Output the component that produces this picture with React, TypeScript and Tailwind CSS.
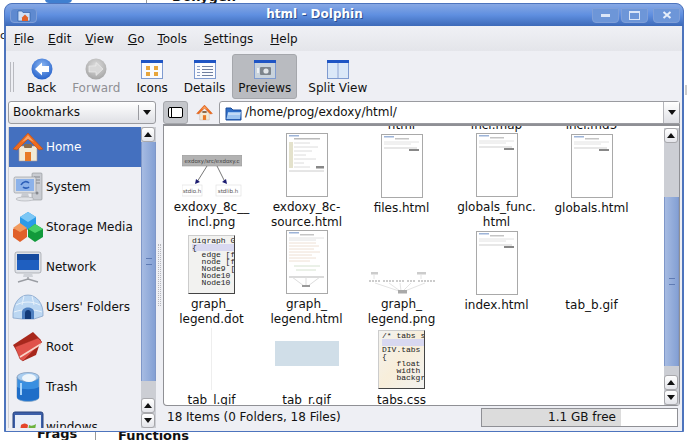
import type { ReactNode } from "react";

function ArrowUp() {
  return (
    <svg width="8" height="5" viewBox="0 0 8 5">
      <path d="M0 5 L4 0 L8 5 Z" fill="#111" />
    </svg>
  );
}

function ArrowDown() {
  return (
    <svg width="8" height="5" viewBox="0 0 8 5">
      <path d="M0 0 L8 0 L4 5 Z" fill="#111" />
    </svg>
  );
}

function HomeIcon({ size }: { size: number }) {
  return (
    <svg width={size} height={size} viewBox="0 0 32 32">
      <path d="M7 15 H25 V30 H7 Z" fill="#f1ead6" stroke="#a99" strokeWidth="0.6" />
      <path d="M1 18 L16 2 L31 18 L27 19 L16 8 L5 19 Z" fill="#ee6b1d" stroke="#c24e10" strokeWidth="0.6" />
      <path d="M10 11 L16 4 L22 11 L16 8 Z" fill="#f7a468" />
      <rect x="13" y="21" width="6" height="9" fill="#e87a26" />
      <rect x="12" y="13" width="8" height="4" rx="1" fill="#8a6d4d" />
    </svg>
  );
}

function FolderIcon() {
  return (
    <svg width="17" height="16" viewBox="0 0 17 16">
      <path d="M1 3 H6 L8 5 H16 V15 H1 Z" fill="#2f6fc8" stroke="#1c4d9a" />
      <path d="M3 7 H16 L15 14 H1.5 Z" fill="#9cc4f0" />
      <path d="M3 9 H15" stroke="#e6f0fb" />
    </svg>
  );
}

function CircleArrow({ disabled, dir }: { disabled?: boolean; dir: "left" | "right" }) {
  const id = disabled ? "gray-ball" : "blue-ball";
  return (
    <svg width="22" height="22" viewBox="0 0 22 22">
      <defs>
        <radialGradient id={id} cx="0.5" cy="0.35" r="0.7">
          <stop offset="0" stopColor={disabled ? "#dedede" : "#8db8f2"} />
          <stop offset="1" stopColor={disabled ? "#a2a2a2" : "#1f5cc8"} />
        </radialGradient>
      </defs>
      <circle cx="11" cy="11" r="10.5" fill={`url(#${id})`} />
      <path
        d={dir === "left" ? "M4 11 L11 4.5 V8 H18 V14 H11 V17.5 Z" : "M18 11 L11 4.5 V8 H4 V14 H11 V17.5 Z"}
        fill={disabled ? "#d8d8d8" : "#fff"}
        stroke={disabled ? "#f2f2f2" : "none"}
        strokeWidth="0.6"
      />
    </svg>
  );
}

function ViewFrame({ children, w = 22 }: { children: ReactNode; w?: number }) {
  return (
    <svg width={w} height="19" viewBox={`0 0 ${w} 19`}>
      <rect x="0.5" y="0.5" width={w - 1} height="18" fill="#fafbfe" stroke="#7f9bd0" />
      <rect x="0" y="0" width={w} height="3" fill="#1f55c4" />
      {children}
    </svg>
  );
}

function IconsViewIcon() {
  return (
    <ViewFrame>
      <rect x="5" y="6" width="4" height="4" fill="#e8a63d" />
      <rect x="13" y="6" width="4" height="4" fill="#e8a63d" />
      <rect x="5" y="12" width="4" height="4" fill="#e8a63d" />
      <rect x="13" y="12" width="4" height="4" fill="#e8a63d" />
    </ViewFrame>
  );
}

function DetailsViewIcon() {
  return (
    <ViewFrame>
      <path d="M3 6.5 H6 M3 9.5 H6 M3 12.5 H6 M3 15.5 H6" stroke="#8b9fc5" />
      <path d="M8 6.5 H19 M8 9.5 H19 M8 12.5 H19 M8 15.5 H19" stroke="#6f7f9f" />
    </ViewFrame>
  );
}

function PreviewsViewIcon() {
  return (
    <ViewFrame>
      <rect x="1" y="3" width="20" height="15" fill="#c9d3dc" />
      <rect x="6" y="7" width="11" height="8" rx="1" fill="#7d858c" />
      <circle cx="12" cy="11" r="2.6" fill="#e3e7ea" />
      <rect x="3" y="8" width="2" height="5" fill="#eef1f4" />
    </ViewFrame>
  );
}

function SplitViewIcon() {
  return (
    <ViewFrame>
      <rect x="1" y="3" width="9.5" height="15" fill="#dbe8f8" />
      <rect x="11.5" y="3" width="9.5" height="15" fill="#dbe8f8" />
      <path d="M11 3 V18" stroke="#7f9bd0" />
    </ViewFrame>
  );
}

function SystemIcon() {
  return (
    <svg width="32" height="32" viewBox="0 0 32 32">
      <rect x="20" y="2" width="10" height="27" rx="1" fill="#c9ccd2" stroke="#8d9096" strokeWidth="0.6" />
      <path d="M22 6 H28 M22 9 H28 M22 12 H28" stroke="#85888e" />
      <circle cx="25" cy="22" r="1.5" fill="#85888e" />
      <rect x="2" y="6" width="22" height="16" rx="1.5" fill="#d9dce2" stroke="#8d9096" strokeWidth="0.6" />
      <rect x="4" y="8" width="18" height="12" fill="#8cb2ea" />
      <path d="M9 14 C11 10 15 10 17 12 M17 16 C15 18 12 17 11 16" stroke="#2c5fb8" strokeWidth="1.6" fill="none" />
      <path d="M10 22 H16 L17 26 H9 Z" fill="#c8cbd1" />
      <ellipse cx="13" cy="28" rx="9" ry="2" fill="#e1e3e7" stroke="#9a9da3" strokeWidth="0.5" />
    </svg>
  );
}

function StorageIcon() {
  return (
    <svg width="32" height="32" viewBox="0 0 32 32">
      <path d="M16 1 L24 6 V14 L16 19 L8 14 V6 Z" fill="#2b9be8" />
      <path d="M16 1 L24 6 L16 11 L8 6 Z" fill="#7cc7f5" />
      <path d="M8 14 L15 18 V26 L8 31 L1 26 V18 Z" fill="#e0602a" />
      <path d="M8 12 L15 17 L8 21 L1 17 Z" fill="#f19a5e" />
      <path d="M23 13 L31 18 V26 L23 31 L16 26 V18 Z" fill="#119a3b" />
      <path d="M23 13 L31 18 L23 22 L16 18 Z" fill="#47cf68" />
    </svg>
  );
}

function NetworkIcon() {
  return (
    <svg width="32" height="32" viewBox="0 0 32 32">
      <rect x="3" y="1" width="26" height="21" rx="2" fill="#dfe2e8" stroke="#8d9096" strokeWidth="0.6" />
      <rect x="5" y="3" width="22" height="16" fill="#1f5fc0" />
      <rect x="5" y="3" width="22" height="6" fill="#154a9e" />
      <path d="M12 22 H20 L21 26 H11 Z" fill="#cfd2d8" />
      <path d="M16 26 V29 M6 31 L16 28 L26 31" stroke="#9a9da3" strokeWidth="1.4" fill="none" />
    </svg>
  );
}

function IglooIcon() {
  return (
    <svg width="32" height="32" viewBox="0 0 32 32">
      <path d="M1 27 C0 12 8 4 16 4 C24 4 32 12 31 25 L22 28 H10 Z" fill="#bcd7f2" stroke="#7d9cc4" strokeWidth="0.7" />
      <path d="M4 14 C12 10 20 10 28 14 M2 21 C10 18 22 18 30 21 M12 5 L10 14 M20 5 L22 14" stroke="#e8f2fb" strokeWidth="1" fill="none" />
      <path d="M10 28 V21 C10 15 22 15 22 21 V28 Z" fill="#4d7fc0" />
      <path d="M13 28 V22 C13 18 19 18 19 22 V28 Z" fill="#123a78" />
    </svg>
  );
}

function RedFolderIcon() {
  return (
    <svg width="32" height="32" viewBox="0 0 32 32">
      <path d="M1 14 L21 1 L29 9 L24 24 L11 30 Z" fill="#a8281c" />
      <path d="M3 16 L26 7 L30 11 L11 30 L8 28 Z" fill="#e0524a" stroke="#9c2a20" strokeWidth="0.5" />
      <path d="M8 26 L29 13" stroke="#f8d4c8" strokeWidth="1.6" />
    </svg>
  );
}

function TrashIcon() {
  return (
    <svg width="32" height="32" viewBox="0 0 32 32">
      <path d="M5 6 V26 C5 32 27 32 27 26 V6 Z" fill="#3a8fe0" stroke="#8ba3bf" strokeWidth="0.7" />
      <path d="M5 16 C10 19 22 19 27 16 V26 C27 31 5 31 5 26 Z" fill="#1f6ec8" />
      <ellipse cx="16" cy="6" rx="11" ry="4.5" fill="#a8cdf0" stroke="#7a93b4" strokeWidth="0.7" />
      <ellipse cx="17" cy="7" rx="7" ry="4" fill="#eef5fb" />
      <path d="M9 12 V24" stroke="#a8d4fa" strokeWidth="2" />
    </svg>
  );
}

function WindowsIcon() {
  return (
    <svg width="32" height="32" viewBox="0 0 32 32">
      <rect x="1" y="1" width="30" height="30" rx="2" fill="#3c5fa8" stroke="#29457f" />
      <rect x="3" y="4" width="26" height="24" fill="#e8eef8" />
      <path d="M9 14 C12 12 14 12 16 14 L15 20 C13 18 11 18 8 20 Z" fill="#e5462a" />
      <path d="M17 14 C19 15 21 15 24 13 L23 19 C21 21 19 21 16 20 Z" fill="#6cb33f" />
      <path d="M8 21 C11 19 13 19 15 21 L14 27 C12 25 10 25 7 27 Z" fill="#3a78d8" />
      <path d="M16 21 C18 22 20 22 23 20 L22 26 C20 28 18 28 15 27 Z" fill="#f2c230" />
    </svg>
  );
}

function PageThumb({ dense }: { dense?: boolean }) {
  return (
    <svg width="42" height="64" viewBox="0 0 42 64">
      <rect x="0.5" y="0.5" width="41" height="63" fill="#fff" stroke="#a9a9a9" />
      <rect x="3" y="2" width="10" height="1.5" fill="#9db4d8" />
      <rect x="14" y="4" width="14" height="1.5" fill="#c5c5c5" />
      <path d="M3 8 H38 M3 10 H30" stroke="#e2e2e2" />
      {dense ? (
        <>
          <path d="M3 13 H30 M3 16 H33 M3 19 H28 M3 22 H34 M3 25 H26 M3 28 H30 M3 31 H24" stroke="#eee0d4" />
          <path d="M8 36 H34 M10 40 H30" stroke="#d5e2d0" />
          <path d="M3 47 H38" stroke="#b5b5b5" />
          <path d="M20 47 L20 56 M6 47 L18 56 M34 47 L22 56" stroke="#ddd" />
          <rect x="16" y="55" width="8" height="2" fill="#999" />
        </>
      ) : (
        <>
          <path d="M3 14 H36" stroke="#cfcfcf" />
          <rect x="28" y="15" width="10" height="2" fill="#888" />
        </>
      )}
    </svg>
  );
}

function SourceThumb() {
  return (
    <svg width="42" height="64" viewBox="0 0 42 64">
      <rect x="0.5" y="0.5" width="41" height="63" fill="#fff" stroke="#a9a9a9" />
      <rect x="3" y="2" width="10" height="1.5" fill="#9db4d8" />
      <rect x="8" y="5" width="26" height="1.5" fill="#bbb" />
      <rect x="3" y="9" width="4" height="26" fill="#e4e2cc" />
      <path d="M8 10 H24 M8 14 H32 M8 18 H26 M8 22 H20 M8 26 H30 M8 30 H18 M8 34 H24" stroke="#dcdcdc" />
      <path d="M3 38 H38" stroke="#ccc" />
      <rect x="30" y="33" width="8" height="2.5" fill="#888" />
    </svg>
  );
}

function GraphThumb() {
  return (
    <svg width="60" height="42" viewBox="0 0 60 42">
      <rect x="0" y="0" width="60" height="11" fill="#b2b2b2" stroke="#999" strokeWidth="0.6" />
      <text x="30" y="7.5" textAnchor="middle" fontSize="5.5" fill="#444">exdoxy/src/exdoxy.c</text>
      <path d="M25 11 L15 27 M35 11 L43 27" stroke="#777" />
      <path d="M13 29 L14 24 L18 27 Z M45 29 L40 27 L44 24 Z" fill="#1b1b70" />
      <rect x="0" y="30" width="20" height="11" fill="#fff" stroke="#ddd" strokeWidth="0.6" />
      <text x="10" y="37.5" textAnchor="middle" fontSize="5.5" fill="#555">stdio.h</text>
      <rect x="34" y="30" width="25" height="11" fill="#fff" stroke="#ddd" strokeWidth="0.6" />
      <text x="46" y="37.5" textAnchor="middle" fontSize="5.5" fill="#555">stdlib.h</text>
    </svg>
  );
}

function LegendThumb() {
  return (
    <svg width="66" height="22" viewBox="0 0 66 22">
      <rect x="2" y="0" width="7" height="2.5" fill="#ccc" />
      <rect x="48" y="0" width="9" height="2.5" fill="#ccc" />
      <path d="M0 9 H12 M14 9 H25 M27 9 H35 M38 9 H46 M49 9 H66" stroke="#ccc" strokeWidth="2" strokeDasharray="2 1" />
      <path d="M6 11 L30 19 M20 11 L31 19 M31 11 L32 19 M42 11 L34 19 M56 11 L36 19 M5 2 V7 M52 2 V7" stroke="#e4e4e4" />
      <rect x="29" y="18" width="9" height="3.5" fill="#aaa" />
    </svg>
  );
}

function CodeThumb({ lines, warm }: { lines: string[]; warm?: boolean }) {
  return (
    <div
      className={`flex h-[59px] w-[47px] flex-col overflow-hidden border border-[#ccc] border-r-[#444] border-b-[#444] pl-[3px] pt-[1px] font-['Liberation_Mono',monospace] text-[8px] leading-[7px] text-[#222] ${
        warm ? "bg-gradient-to-br from-[#f2f2f0] via-[#f8eeda] to-[#f2f2f0]" : "bg-[#f2f2f0]"
      }`}
    >
      {lines.map((line, i) => (
        <div key={i} className={`h-[7px] shrink-0 whitespace-pre ${i === 1 ? "bg-[#d8d8f0]" : ""}`}>
          {line}
        </div>
      ))}
    </div>
  );
}

const files: { label: string[]; thumb?: ReactNode }[] = [
  { label: ["", ""] },
  { label: ["", ""] },
  { label: ["exdoxy_8c_", "html"] },
  { label: ["globals_", "incl.map"] },
  { label: ["globals_", "incl.md5"] },
  { label: ["exdoxy_8c__", "incl.png"], thumb: <GraphThumb /> },
  { label: ["exdoxy_8c-", "source.html"], thumb: <SourceThumb /> },
  { label: ["files.html"], thumb: <PageThumb /> },
  { label: ["globals_func.", "html"], thumb: <PageThumb /> },
  { label: ["globals.html"], thumb: <PageThumb /> },
  {
    label: ["graph_", "legend.dot"],
    thumb: (
      <CodeThumb lines={["digraph G", "{", "  edge [fo", "  node [fo", "  Node9 [s", "  Node10 -", "  Node10 ["]} />
    ),
  },
  { label: ["graph_", "legend.html"], thumb: <PageThumb dense /> },
  { label: ["graph_", "legend.png"], thumb: <LegendThumb /> },
  { label: ["index.html"], thumb: <PageThumb /> },
  { label: ["tab_b.gif"] },
  { label: ["tab_l.gif"], thumb: <div className="h-[62px] w-px bg-[#eeeeee]" /> },
  { label: ["tab_r.gif"], thumb: <div className="mb-[24px] h-[25px] w-[64px] bg-[#d0dee8]" /> },
  {
    label: ["tabs.css"],
    thumb: (
      <div className="mb-px">
        <CodeThumb warm lines={["/* tabs st", "", "DIV.tabs", "{", "   float", "   width", "   backgro"]} />
      </div>
    ),
  },
];

const places = [
  { name: "Home", icon: <HomeIcon size={32} />, active: true },
  { name: "System", icon: <SystemIcon /> },
  { name: "Storage Media", icon: <StorageIcon /> },
  { name: "Network", icon: <NetworkIcon /> },
  { name: "Users' Folders", icon: <IglooIcon /> },
  { name: "Root", icon: <RedFolderIcon /> },
  { name: "Trash", icon: <TrashIcon /> },
  { name: "windows", icon: <WindowsIcon /> },
];

const tools = [
  { name: "Back", icon: <CircleArrow dir="left" />, cls: "px-[6px]" },
  { name: "Forward", icon: <CircleArrow dir="right" disabled />, disabled: true, cls: "px-[6px]" },
  { name: "Icons", icon: <IconsViewIcon />, cls: "px-[6px]" },
  { name: "Details", icon: <DetailsViewIcon />, cls: "px-[6px]" },
  { name: "Previews", icon: <PreviewsViewIcon />, active: true, cls: "-ml-[2px] px-[5px]" },
  { name: "Split View", icon: <SplitViewIcon />, cls: "ml-[2px] px-[6px]" },
];

const menus = [
  { name: "File", cls: "" },
  { name: "Edit", cls: "" },
  { name: "View", cls: "" },
  { name: "Go", cls: "" },
  { name: "Tools", cls: "-ml-px" },
  { name: "Settings", cls: "ml-[3px]" },
  { name: "Help", cls: "ml-[3px]" },
];

function ScrollButton({ children }: { children: ReactNode }) {
  return (
    <div className="flex h-[15px] w-[14px] items-center justify-center rounded-[3px] border border-[#a8a8ac] bg-gradient-to-b from-white to-[#e4e5ea]">
      {children}
    </div>
  );
}

function Scrollbar({ before, thumb, after }: { before: string; thumb: string; after: string }) {
  return (
    <div className="flex h-full w-[15px] shrink-0 flex-col bg-[#ccced4]">
      <ScrollButton>
        <ArrowUp />
      </ScrollButton>
      <div className={before} />
      <div className={`${thumb} flex items-center justify-center border-x border-[#7f97c8] bg-gradient-to-r from-[#a6bbe2] to-[#84a0d4]`}>
        <div className="h-[7px] w-[6px] border-y border-[#5f7bb4]" />
      </div>
      <div className={after} />
      <ScrollButton>
        <ArrowUp />
      </ScrollButton>
      <ScrollButton>
        <ArrowDown />
      </ScrollButton>
    </div>
  );
}

export default function App() {
  return (
    <div className="relative h-[440px] w-[687px] overflow-hidden bg-white font-['DejaVu_Sans',sans-serif] text-[12px] leading-[15px] text-[#111]">
      {/* window underneath */}
      <div className="absolute left-[172px] top-[-11px] text-[13px] font-bold">Doxygen</div>
      <div className="absolute left-[45px] top-[-6px] h-[9px] w-[27px] rounded-sm bg-[#3f7fd0]" />
      <div className="absolute left-[146px] top-0 h-[4px] w-px bg-[#999]" />
      <div className="absolute left-[37px] top-[426px] text-[13px] font-bold">Frags</div>
      <div className="absolute left-[118px] top-[428px] text-[13px] font-bold">Functions</div>
      <div className="absolute left-[95px] top-[432px] h-[8px] w-px bg-[#999]" />
      <div className="absolute left-0 top-[28px] text-[11px]">c</div>
      <div className="absolute left-[685px] top-[85px] h-[10px] w-[2px] bg-[#ccc]" />

      <div className="absolute left-[4px] top-[3px] flex h-[429px] w-[680px] flex-col overflow-hidden rounded-t-[8px] border border-[#4d74bd] bg-[#4d74bd]">
        {/* title bar */}
        <div className="flex h-[22px] shrink-0 items-center bg-gradient-to-b from-[#87a8e4] via-[#5f8fe0] to-[#3d6ab8] pl-[5px] pr-[3px]">
          <div className="flex h-[15px] w-[27px] items-center justify-center rounded-[4px] border border-[#7f9fd8] bg-[#5f8ad0]">
            <svg width="14" height="13" viewBox="0 0 14 13">
              <path d="M1 2 H5 L6 3.5 H13 V12 H1 Z" fill="#cfe0f8" stroke="#2f5fa8" strokeWidth="0.7" />
              <path d="M5 8.5 L8 5.5 L11 8.5 V12 H5 Z" fill="#e2622a" />
            </svg>
          </div>
          <div className="flex-1 pb-[2px] text-center text-[12px] font-bold text-white [text-shadow:1px_1px_0_#2c4f8f]">
            html - Dolphin
          </div>
          <div className="flex items-center gap-[2px]">
            <div className="flex h-[15px] w-[27px] items-center justify-center rounded-b-[4px] border border-[#7f9fd8] bg-[#6d96d8]">
              <div className="h-[3px] w-[9px] bg-[#dbe6f8]" />
            </div>
            <div className="flex h-[15px] w-[27px] items-center justify-center rounded-b-[4px] border border-[#7f9fd8] bg-[#6d96d8]">
              <div className="h-[9px] w-[11px] border border-t-2 border-[#dbe6f8]" />
            </div>
            <div className="ml-[3px] flex h-[15px] w-[27px] items-center justify-center rounded-b-[4px] border border-[#7f9fd8] bg-[#6d96d8]">
              <svg width="10" height="8" viewBox="0 0 10 8">
                <path d="M1.5 1 L8.5 7 M8.5 1 L1.5 7" stroke="#e6eefa" strokeWidth="2" />
              </svg>
            </div>
          </div>
        </div>

        {/* client area */}
        <div className="ml-px mr-px flex min-h-0 flex-1 flex-col bg-[#eeeff4]">
          {/* menu bar */}
          <div className="flex h-[25px] shrink-0 items-center gap-[14px] bg-gradient-to-b from-[#f0f1f5] to-[#e4e5ea] pl-[8px] pt-px">
            {menus.map((m) => (
              <div key={m.name} className={m.cls}>
                <span className="underline">{m.name[0]}</span>
                {m.name.slice(1)}
              </div>
            ))}
          </div>

          {/* toolbar */}
          <div className="flex h-[50px] shrink-0 items-start pl-[4px] pt-[3px]">
            <div className="mr-[6px] mt-[8px] h-[30px] w-[4px] border-x border-[#b9bac0]" />
            <div className="flex items-center gap-[2px]">
              {tools.map((t) => (
                <div
                  key={t.name}
                  className={`flex h-[45px] flex-col items-center rounded-[3px] pt-[2px] ${t.cls} ${
                    t.active ? "border border-[#a5a7ac] bg-[#b9bbc0]" : "border border-transparent"
                  } ${t.disabled ? "text-[#8f9094]" : ""}`}
                >
                  <div className="flex h-[24px] items-center">{t.icon}</div>
                  <div>{t.name}</div>
                </div>
              ))}
            </div>
          </div>

          {/* panels */}
          <div className="flex min-h-0 flex-1 pb-[3px] pl-[2px] pr-[2px]">
            <div className="flex w-[148px] shrink-0 flex-col">
              <div className="flex h-[23px] shrink-0 items-center rounded-[3px] border border-[#9a9ba0] bg-gradient-to-b from-white to-[#dfe0e5] pl-[4px]">
                <span className="flex-1">Bookmarks</span>
                <div className="flex h-[15px] w-[17px] items-center justify-center border-l border-[#9a9ba0]">
                  <ArrowDown />
                </div>
              </div>
              <div className="mt-[3px] flex min-h-0 flex-1 border-l border-[#d0d1d6]">
                <div className="min-w-0 flex-1 overflow-hidden">
                  {places.map((p) => (
                    <div
                      key={p.name}
                      className={`flex h-[40px] items-center gap-[2px] pl-[3px] ${p.active ? "bg-[#4470bf] text-white" : ""}`}
                    >
                      <div className="h-[32px] w-[32px] shrink-0">{p.icon}</div>
                      <span className="whitespace-nowrap">{p.name}</span>
                    </div>
                  ))}
                </div>
                <Scrollbar before="h-0" thumb="h-[239px]" after="flex-1" />
              </div>
            </div>

            {/* splitter */}
            <div className="flex w-[7px] shrink-0 items-center justify-center pt-[20px]">
              <div className="h-[62px] w-[3px] border-x border-dotted border-[#b5b6bb]" />
            </div>

            <div className="flex min-w-0 flex-1 flex-col">
              {/* location bar */}
              <div className="flex h-[23px] shrink-0 items-center">
                <div className="flex h-[23px] w-[25px] items-center justify-center rounded-[3px] border border-[#a5a7ac] bg-[#c4c6cb]">
                  <div className="h-[11px] w-[15px] rounded-[2px] border border-black bg-white pl-[2px]">
                    <div className="h-full w-px bg-black" />
                  </div>
                </div>
                <div className="ml-[7px] flex h-[18px] w-[18px] items-center justify-center">
                  <HomeIcon size={17} />
                </div>
                <div className="ml-[6px] flex h-[23px] min-w-0 flex-1 items-center rounded-t-[3px] border border-[#9a9ba0] bg-white pl-[5px]">
                  <FolderIcon />
                  <span className="ml-[3px] flex-1 text-[12px]">/home/prog/exdoxy/html/</span>
                  <div className="flex h-full w-[16px] items-center justify-center border-l border-[#b5b6bb] bg-gradient-to-b from-white to-[#dfe0e5]">
                    <ArrowDown />
                  </div>
                </div>
              </div>

              {/* file view */}
              <div className="flex h-[282px] shrink-0 rounded-b-[4px] border border-t-2 border-[#8f9095] bg-white">
                <div className="min-w-0 flex-1 overflow-hidden">
                  <div className="-mt-[90px] grid auto-rows-[97px] grid-cols-[repeat(5,95px)]">
                    {files.map((f, i) => (
                      <div key={i} className={`flex flex-col items-center ${i >= 15 ? "-mt-[2px]" : ""}`}>
                        <div className="flex h-[68px] items-end justify-center pb-[3px]">{f.thumb}</div>
                        {f.label.map((l, j) => (
                          <div key={j} className="h-[15px] whitespace-nowrap text-center">
                            {l}
                          </div>
                        ))}
                      </div>
                    ))}
                  </div>
                </div>
                <div className="pt-[2px]">
                  <Scrollbar before="h-[54px]" thumb="h-[169px]" after="flex-1" />
                </div>
              </div>

              {/* status bar */}
              <div className="flex min-h-0 flex-1 items-center pl-[4px] pr-[2px]">
                <span className="flex-1">18 Items (0 Folders, 18 Files)</span>
                <div className="flex h-[19px] w-[197px] border border-[#8f9095] bg-white">
                  <div className="flex h-full w-[139px] items-center justify-end bg-[#dcdcdc] pr-[5px]">1.1 GB free</div>
                </div>
              </div>
            </div>
          </div>
        </div>
      </div>
    </div>
  );
}
